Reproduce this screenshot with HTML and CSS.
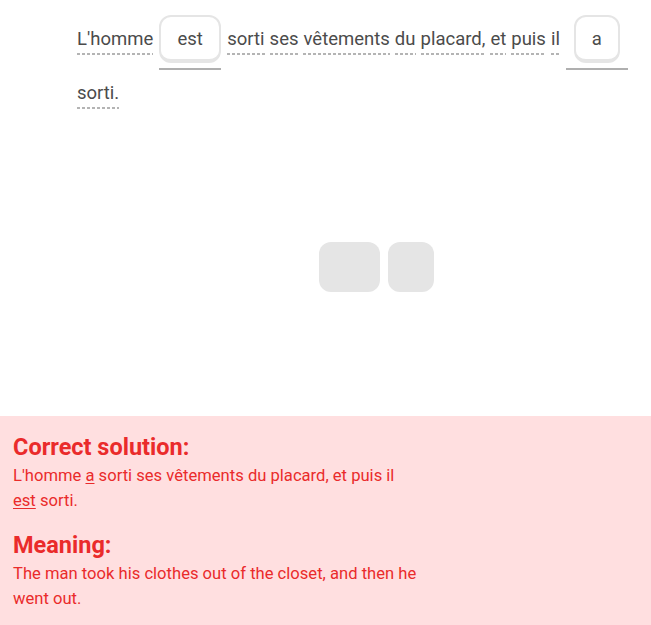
FILE: index.html
```html
<!DOCTYPE html>
<html lang="fr">
<head>
<meta charset="utf-8">
<link rel="stylesheet" href="styles.css">
</head>
<body>
<main class="page">
  <section class="challenge">
    <div class="sentence">
      <span class="word">L'homme</span>
      <span class="blank"><span class="box">est</span><span class="line"></span></span>
      <span class="word">sorti</span>
      <span class="word">ses</span>
      <span class="word">vêtements</span>
      <span class="word">du</span>
      <span class="word">placard,</span>
      <span class="word">et</span>
      <span class="word">puis</span>
      <span class="word">il</span>
      <span class="blank"><span class="box">a</span><span class="line"></span></span>
      <span class="word">sorti.</span>
    </div>
    <div class="bank">
      <span class="tile tile-wide"></span>
      <span class="tile tile-narrow"></span>
    </div>
  </section>
  <section class="feedback">
    <h2 class="fb-title">Correct solution:</h2>
    <p class="fb-text">L'homme <u>a</u> sorti ses vêtements du placard, et puis il <u>est</u> sorti.</p>
    <h2 class="fb-title fb-second">Meaning:</h2>
    <p class="fb-text">The man took his clothes out of the closet, and then he went out.</p>
  </section>
</main>
</body>
</html>
```
FILE: styles.css
```css
* { box-sizing: border-box; }
html, body { margin: 0; padding: 0; background: #fff; }
body { font-family: Roboto, "Noto Sans", sans-serif; width: 651px; height: 625px; overflow: hidden; }
.page { display: flex; flex-direction: column; height: 625px; }
.challenge { flex: 1; display: flex; flex-direction: column; }
.sentence {
  display: flex; flex-wrap: wrap; align-items: baseline;
  column-gap: 5px; row-gap: 11px;
  padding: 15px 16px 0 77px;
  font-size: 18.5px; color: #4b4b4b;
}
.word {
  line-height: 24px;
  padding-bottom: 4px;
  background-image: linear-gradient(to right, #b4b4b4 0 3px, transparent 3px 5px);
  background-size: 5px 2px;
  background-repeat: repeat-x;
  background-position: 0 100%;
}
.blank { display: inline-flex; flex-direction: column; align-items: center; margin: 0 1px; min-width: 62px; }
.box {
  display: block; height: 48px; padding: 0 16px;
  line-height: 44px; text-align: center;
  border: 2px solid #e5e5e5; border-bottom-width: 4px; border-radius: 12px;
  color: #4b4b4b;
}
.line { display: block; width: 100%; height: 2px; margin-top: 5px; background: #afafaf; }
.bank { display: flex; justify-content: center; gap: 8px; margin-top: 133px; padding-left: 101px; }
.tile { display: block; height: 50px; background: #e5e5e5; border-radius: 12px; }
.tile-wide { width: 61px; }
.tile-narrow { width: 46px; }
.feedback {
  background: #ffdfe0; color: #ea2b2b; height: 209px;
  padding: 17px 13px 0;
}
.fb-title { margin: 0; font-size: 23.5px; font-weight: 700; line-height: 28px; }
.fb-second { margin-top: 18px; }
.fb-text { margin: 2px 0 0; font-size: 16.6px; line-height: 25px; max-width: 405px; }
.fb-text u { text-underline-offset: 2px; }
```
